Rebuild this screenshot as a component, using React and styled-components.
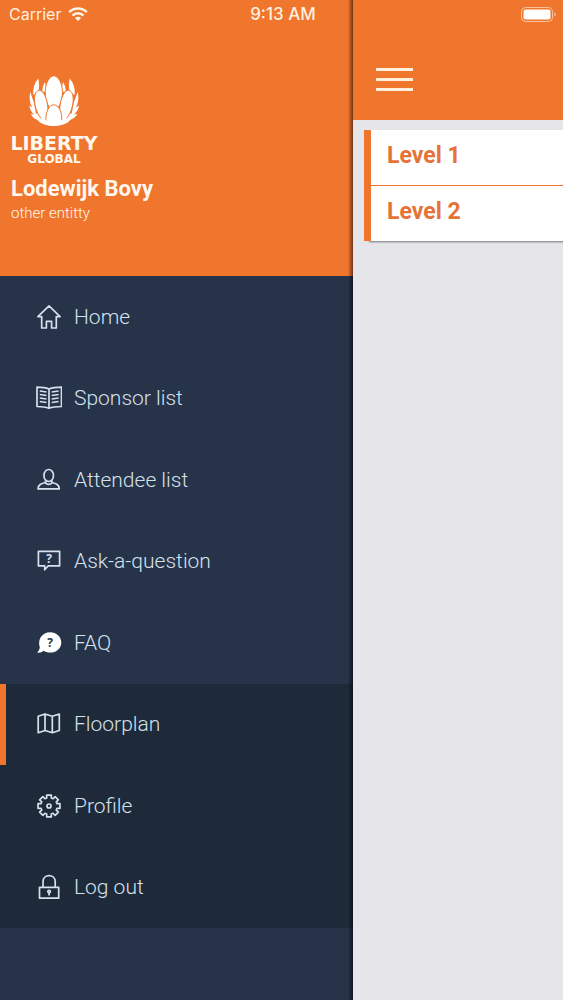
import { useState } from "react";
import styled, { createGlobalStyle } from "styled-components";

const orange = "#f0752d";
const navy = "#263349";
const darkNavy = "#1e2a3a";
const pale = "#d5e1ec";

const menu = [
  { name: "Home", icon: HomeIcon },
  { name: "Sponsor list", icon: BookIcon },
  { name: "Attendee list", icon: PersonIcon },
  { name: "Ask-a-question", icon: QuestionIcon },
  { name: "FAQ", icon: FaqIcon },
  { name: "Floorplan", icon: MapIcon, dark: true },
  { name: "Profile", icon: GearIcon, dark: true },
  { name: "Log out", icon: LockIcon, dark: true },
];

const levels = ["Level 1", "Level 2"];

export default function App() {
  const [selected, setSelected] = useState("Floorplan");

  return (
    <Screen>
      <GlobalStyle />
      <StatusBar>
        <Carrier>
          Carrier
          <WifiIcon />
        </Carrier>
        <Time>9:13 AM</Time>
        <Battery>
          <BatteryIcon />
        </Battery>
      </StatusBar>

      <Drawer>
        <Account>
          <Logo>
            <LotusIcon />
            <Brand>LIBERTY</Brand>
            <SubBrand>GLOBAL</SubBrand>
          </Logo>
          <UserName>Lodewijk Bovy</UserName>
          <Entity>other entitty</Entity>
        </Account>
        <Menu>
          {menu.map(({ name, icon: Icon, dark }) => (
            <MenuItem
              key={name}
              href="#"
              $dark={dark}
              $selected={name === selected}
              onClick={(e) => {
                e.preventDefault();
                setSelected(name);
              }}
            >
              <Icon />
              {name}
            </MenuItem>
          ))}
        </Menu>
      </Drawer>

      <Page>
        <Header>
          <MenuButton type="button" aria-label="Menu">
            <span />
            <span />
            <span />
          </MenuButton>
        </Header>
        <Levels>
          {levels.map((level) => (
            <Level key={level}>
              <a href="#">{level}</a>
            </Level>
          ))}
        </Levels>
      </Page>
    </Screen>
  );
}

function LotusIcon() {
  return (
    <svg width="52" height="52" viewBox="85 44 157 157" fill="#fff">
      <path d="M163 197C140 197 122 192 114 180C102 176 96 168 94 161L104 164C94 155 90 145 89 136L99 143C90 130 88 112 92 95L103 128L109 160H217L223 128L235 95C239 112 237 130 228 143L239 136C238 145 233 155 223 164L234 161C231 168 224 176 212 180C204 192 186 197 163 197Z" />
      <g stroke={orange} strokeWidth="3">
        <path d="M117 52C102 68 98 85 100 106L118 98C121 82 120 67 117 52Z" />
        <path d="M210 52C225 68 229 85 227 106L209 98C206 82 207 67 210 52Z" />
        <path d="M136 63C129 74 126 86 127 96L142 96C142 82 140 72 136 63Z" />
        <path d="M191 63C198 74 201 86 200 96L185 96C185 82 187 72 191 63Z" />
        <path d="M163 46C149 48 137 69 137 96C137 122 149 151 163 151S189 122 189 96C189 69 177 48 163 46Z" />
        <path d="M119 90C107 91 103 108 105 126C107 148 119 174 136 187C144 180 147 162 145 143C143 116 132 90 119 90Z" />
        <path d="M207 90C219 91 223 108 221 126C219 148 207 174 190 187C182 180 179 162 181 143C183 116 194 90 207 90Z" />
        <path d="M163 134C149 135 139 153 139 176C139 184 141 190 145 193C155 198 171 198 181 193C185 190 187 184 187 176C187 153 177 135 163 134Z" />
      </g>
      <path d="M118 170C133 188 192 188 208 170C205 190 185 198 163 198S121 190 118 170Z" />
    </svg>
  );
}

function WifiIcon() {
  return (
    <svg width="20" height="14" viewBox="0 0 20 14" fill="none" stroke="#fff4e6" strokeWidth="2.5">
      <path d="M1.2 5.2C6.2 .4 13.8 .4 18.8 5.2" />
      <path d="M4.5 8.5C7.6 5.5 12.4 5.5 15.5 8.5" />
      <path d="M10 14L6.9 10.9C8.7 9.2 11.3 9.2 13.1 10.9Z" fill="#fff4e6" stroke="none" />
    </svg>
  );
}

function BatteryIcon() {
  return (
    <svg width="36" height="15" viewBox="0 0 36 15">
      <rect x=".5" y=".5" width="31" height="14" rx="4" fill="none" stroke="#f9c39f" />
      <rect x="2.5" y="2.5" width="27" height="10" rx="2" fill="#fff" />
      <path d="M33.2 5.5C35.2 6 35.2 9 33.2 9.5Z" fill="#f9c39f" />
    </svg>
  );
}

function HomeIcon() {
  return (
    <Icon>
      <path d="M13 1.9L1.9 12.6H5.7V24H10.4V17.4H15.6V24H20.3V12.6H24.1Z" />
    </Icon>
  );
}

function BookIcon() {
  return (
    <Icon>
      <path d="M13 4C9 2.2 5 2.1 1 2.1V21.5C5 21.5 9 21.7 13 23.2C17 21.7 21 21.5 25.5 21.5V2.1C21 2.1 17 2.2 13 4ZM13 4V23" />
      <path d="M3.8 6L10.5 7M3.8 9.5L10.5 10.5M3.8 13L10.5 14M3.8 16.5L10.5 17.5M15.7 7L22.6 6M15.7 10.5L22.6 9.5M15.7 14L22.6 13M15.7 17.5L22.6 16.5" />
    </Icon>
  );
}

function PersonIcon() {
  return (
    <Icon>
      <ellipse cx="12.7" cy="8.5" rx="4.8" ry="6" />
      <path d="M9.5 13.5V15.5C6 16.5 2.3 17 2 21.8H23.3C23 17 19.4 16.5 15.9 15.5V13.5M9.3 15.7C11 18 14.4 18 16.1 15.7" />
    </Icon>
  );
}

function QuestionIcon() {
  return (
    <Icon>
      <path d="M2.4 3.3H23.6V17.8H12.3L8.7 21.8V17.8H2.4Z" />
      <Mark x="13" y="14.5" fill={pale}>?</Mark>
    </Icon>
  );
}

function FaqIcon() {
  return (
    <Icon>
      <path d="M14 2.2C20.5 2.2 25.3 6.8 25.3 12.4S20.5 22.6 14 22.6C11.5 22.6 9.3 22 7.5 20.8C6 22.3 3.5 23 1 22.6C2.7 21 3.6 19.4 3.8 17.2C1.2 9.5 6.3 2.2 14 2.2Z" fill="#fff" stroke="none" />
      <Mark x="14" y="16.5" fill={navy}>?</Mark>
    </Icon>
  );
}

function MapIcon() {
  return (
    <Icon>
      <path d="M2.2 5.2L9 3L16.3 5.2L23.3 3V19.5L16.3 21.7L9 19.5L2.2 21.7ZM9 3V19.5M16.3 5.2V21.7" />
    </Icon>
  );
}

function GearIcon() {
  const points = [];
  for (let i = 0; i < 8; i++) {
    [[-16, 8.3], [-12, 11.2], [12, 11.2], [16, 8.3]].forEach(([turn, r]) => {
      const angle = ((i * 45 + turn) * Math.PI) / 180;
      points.push(`${13 + r * Math.sin(angle)},${13 - r * Math.cos(angle)}`);
    });
  }

  return (
    <Icon>
      <polygon points={points.join(" ")} />
      <circle cx="13" cy="13" r="2" />
    </Icon>
  );
}

function LockIcon() {
  return (
    <Icon>
      <path d="M3.5 13.3H22.7V24.2H3.5Z" />
      <path d="M7 13.3V7.7C7 -.4 19.2 -.4 19.2 7.7V13.3" />
      <circle cx="13.1" cy="17.6" r="1.3" />
      <path d="M13.1 18.5V21.5" />
    </Icon>
  );
}

function Icon({ children }) {
  return (
    <IconSvg viewBox="0 0 26 26" aria-hidden="true">
      {children}
    </IconSvg>
  );
}

const GlobalStyle = createGlobalStyle`
  * {
    box-sizing: border-box;
  }
  body {
    margin: 0;
    font-family: Roboto, "Liberation Sans", sans-serif;
  }
  a {
    color: inherit;
    text-decoration: none;
  }
`;

const Screen = styled.div`
  position: relative;
  display: flex;
  min-height: 100vh;
  background-color: #e6e5ea;
`;

const StatusBar = styled.div`
  position: absolute;
  z-index: 2;
  top: 0;
  left: 0;
  width: 100%;
  height: 28px;
  padding: 0 6px 0 9px;
  display: grid;
  grid-template-columns: 1fr auto 1fr;
  align-items: center;
  font-family: Inter, "Liberation Sans", sans-serif;
  font-size: 16px;
  color: #fff0df;
`;

const Carrier = styled.div`
  display: flex;
  align-items: center;
  gap: 7px;
`;

const Time = styled.div`
  font-size: 17px;
  font-weight: 500;
`;

const Battery = styled.div`
  display: flex;
  justify-content: flex-end;
`;

const Drawer = styled.aside`
  position: relative;
  flex: 1;
  background-color: ${navy};
  &::after {
    content: "";
    position: absolute;
    top: 0;
    right: 0;
    bottom: 0;
    width: 5px;
    background: linear-gradient(to right, transparent, rgba(0, 0, 0, 0.55));
    pointer-events: none;
  }
`;

const Account = styled.div`
  height: 276px;
  padding: 75px 11px 0;
  background-color: ${orange};
  color: #fff8ef;
`;

const Logo = styled.div`
  width: 86px;
  display: flex;
  flex-direction: column;
  align-items: center;
  font-family: "DejaVu Sans", sans-serif;
  font-weight: 700;
`;

const Brand = styled.div`
  margin-top: 5px;
  font-size: 19px;
  line-height: 22px;
`;

const SubBrand = styled.div`
  font-size: 12px;
  line-height: 10px;
`;

const UserName = styled.h1`
  margin: 11px 0 0;
  font-size: 22px;
  line-height: 28px;
  font-weight: 700;
`;

const Entity = styled.p`
  margin: 0;
  font-size: 15px;
  line-height: 20px;
  font-weight: 300;
`;

const Menu = styled.nav`
  display: grid;
  grid-auto-rows: 1fr;
  height: 652px;
`;

const MenuItem = styled.a`
  display: flex;
  align-items: center;
  gap: 12px;
  padding-left: 30px;
  border-left: 6px solid ${({ $selected }) => ($selected ? orange : "transparent")};
  background-color: ${({ $dark }) => ($dark ? darkNavy : navy)};
  font-size: 21px;
  font-weight: 300;
  color: ${pale};
`;

const IconSvg = styled.svg`
  width: 26px;
  height: 26px;
  fill: none;
  stroke: ${pale};
  stroke-width: 1.7;
  stroke-linejoin: round;
`;

const Mark = styled.text`
  font-family: "Open Sans", sans-serif;
  font-size: 12px;
  font-weight: 700;
  text-anchor: middle;
  stroke: none;
`;

const Page = styled.main`
  width: 210px;
`;

const Header = styled.header`
  height: 120px;
  padding: 68px 23px 0;
  background-color: ${orange};
`;

const MenuButton = styled.button`
  display: flex;
  flex-direction: column;
  gap: 7px;
  padding: 0;
  border: none;
  background: none;
  cursor: pointer;
  span {
    width: 37px;
    height: 3px;
    background-color: #fff0dc;
  }
`;

const Levels = styled.ul`
  margin: 10px 0 0 11px;
  padding: 0;
  list-style: none;
  background-color: #fff;
  border-left: 7px solid ${orange};
  box-shadow: 4px 2px 2px -1px #77777c;
`;

const Level = styled.li`
  height: 55px;
  padding: 12px 16px;
  font-size: 23px;
  line-height: 28px;
  font-weight: 700;
  color: #e4733a;
  &:not(:last-child) {
    height: 56px;
    border-bottom: 1px solid ${orange};
  }
`;
